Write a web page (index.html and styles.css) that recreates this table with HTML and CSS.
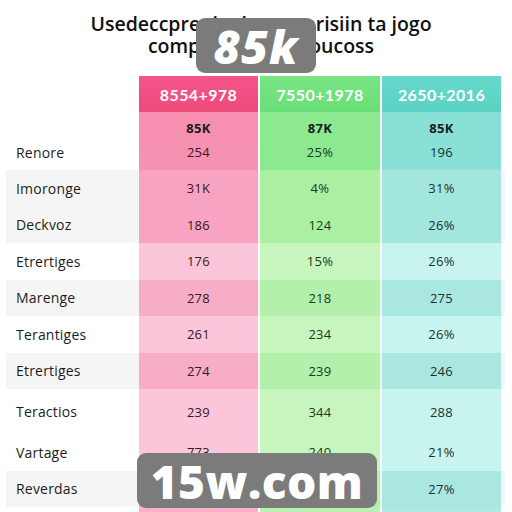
FILE: index.html
```html
<!DOCTYPE html>
<html lang="en">
<head>
  <meta charset="UTF-8">
  <meta name="viewport" content="width=device-width, initial-scale=1.0">
  <title>Comparison</title>
  <link rel="stylesheet" href="styles.css">
</head>
<body>
  <div class="page">
    <h1 class="title">Usedeccpreniuel comparisiin ta jogo<br>comparitiong af foucoss</h1>

    <div class="table">
      <div class="row head">
        <div class="label"></div>
        <div class="cell pink">8554+978</div>
        <div class="cell green">7550+1978</div>
        <div class="cell teal">2650+2016</div>
      </div>
      <div class="row first">
        <div class="label">Renore</div>
        <div class="cell pink"><b>85K</b><span>254</span></div>
        <div class="cell green"><b>87K</b><span>25%</span></div>
        <div class="cell teal"><b>85K</b><span>196</span></div>
      </div>
      <div class="row gray">
        <div class="label">Imoronge</div>
        <div class="cell pink">31K</div>
        <div class="cell green">4%</div>
        <div class="cell teal">31%</div>
      </div>
      <div class="row gray">
        <div class="label">Deckvoz</div>
        <div class="cell pink">186</div>
        <div class="cell green">124</div>
        <div class="cell teal">26%</div>
      </div>
      <div class="row light">
        <div class="label">Etrertiges</div>
        <div class="cell pink">176</div>
        <div class="cell green">15%</div>
        <div class="cell teal">26%</div>
      </div>
      <div class="row gray mid">
        <div class="label">Marenge</div>
        <div class="cell pink">278</div>
        <div class="cell green">218</div>
        <div class="cell teal">275</div>
      </div>
      <div class="row light">
        <div class="label">Terantiges</div>
        <div class="cell pink">261</div>
        <div class="cell green">234</div>
        <div class="cell teal">26%</div>
      </div>
      <div class="row gray mid">
        <div class="label">Etrertiges</div>
        <div class="cell pink">274</div>
        <div class="cell green">239</div>
        <div class="cell teal">246</div>
      </div>
      <div class="row light tall">
        <div class="label">Teractios</div>
        <div class="cell pink">239</div>
        <div class="cell green">344</div>
        <div class="cell teal">288</div>
      </div>
      <div class="row light">
        <div class="label">Vartage</div>
        <div class="cell pink">773</div>
        <div class="cell green">240</div>
        <div class="cell teal">21%</div>
      </div>
      <div class="row gray mid">
        <div class="label">Reverdas</div>
        <div class="cell pink"></div>
        <div class="cell green"></div>
        <div class="cell teal">27%</div>
      </div>
      <div class="row foot">
        <div class="label"></div>
        <div class="cell pink"></div>
        <div class="cell green"></div>
        <div class="cell teal"></div>
      </div>
    </div>

    <div class="badge badge-top">85k</div>
    <div class="badge badge-bottom">15w.com</div>
  </div>
</body>
</html>
```

FILE: styles.css
```css
body {
  margin: 0;
  background: #fff;
  font-family: 'Open Sans', 'Lato', sans-serif;
  color: #222;
}

.page {
  position: relative;
  width: 512px;
  height: 512px;
  overflow: hidden;
}

.title {
  margin: 13px 0 0 0;
  padding-left: 10px;
  text-align: center;
  font-size: 19.5px;
  line-height: 22px;
  font-weight: 600;
  color: #111;
}

.table {
  margin: 19px 0 0 6px;
  width: 499px;
}

.row {
  display: grid;
  grid-template-columns: 131px 119px 120px 119px;
  column-gap: 2px;
  height: 36.5px;
  align-items: stretch;
  font-size: 13px;
}

.row.gray {
  background: #f5f5f5;
}

.label {
  display: flex;
  align-items: center;
  padding-left: 10px;
  font-size: 14px;
  color: #1d1d1d;
  letter-spacing: 0.2px;
}

.cell {
  display: flex;
  flex-direction: column;
  align-items: center;
  justify-content: center;
  letter-spacing: 0.3px;
}

.cell.pink { background: #f9b0c9; color: #3a1624; }
.cell.green { background: #baf2b3; color: #183a1c; }
.cell.teal { background: #aee9e2; color: #183232; }

/* header */
.row.head {
  height: 36px;
  font-family: 'Lato', 'Open Sans', sans-serif;
  font-size: 16px;
  font-weight: 700;
}
.row.head .cell { color: #fff; letter-spacing: 0.4px; }
.row.head .pink { background: linear-gradient(#f45589, #ee4a7c); }
.row.head .green { background: linear-gradient(#78e683, #6ade76); }
.row.head .teal { background: linear-gradient(#67d9cc, #5ad2c4); }

/* top values row */
.row.first {
  height: 58px;
}
.row.first .label { padding-top: 22px; }
.row.first .cell { justify-content: flex-start; padding-top: 7px; }
.row.first .cell b { font-weight: 700; font-size: 13px; margin-bottom: 6px; color: #1c1c1c; }
.row.first .pink { background: linear-gradient(#f78fb0, #f692b2); }
.row.first .green { background: #8de98f; }
.row.first .teal { background: #88e0d6; }

.row.gray .pink { background: #f7a3c1; }
.row.gray .green { background: #aaefa2; }
.row.gray .teal { background: #a2e6dd; }

.row.mid .pink { background: #f8adc7; }
.row.mid .green { background: #b3f0ab; }
.row.mid .teal { background: #aae7e0; }

.row.light .pink { background: #fbc6da; }
.row.light .green { background: #c6f5be; }
.row.light .teal { background: #c8f4f0; }

.row.tall {
  height: 45px;
}

.row.foot {
  height: 8px;
}

/* watermark badges */
.badge {
  position: absolute;
  background: #7b7b7b;
  color: #fff;
  font-family: 'Open Sans', 'Lato', sans-serif;
  font-weight: 800;
  display: flex;
  align-items: center;
  justify-content: center;
  border-radius: 9px;
}

.badge-top {
  left: 196px;
  top: 18px;
  width: 120px;
  height: 55px;
  font-size: 46px;
  font-style: italic;
  letter-spacing: 1px;
}

.badge-bottom {
  left: 137px;
  top: 453px;
  width: 240px;
  height: 55px;
  font-size: 46px;
  letter-spacing: 0.5px;
}
```
